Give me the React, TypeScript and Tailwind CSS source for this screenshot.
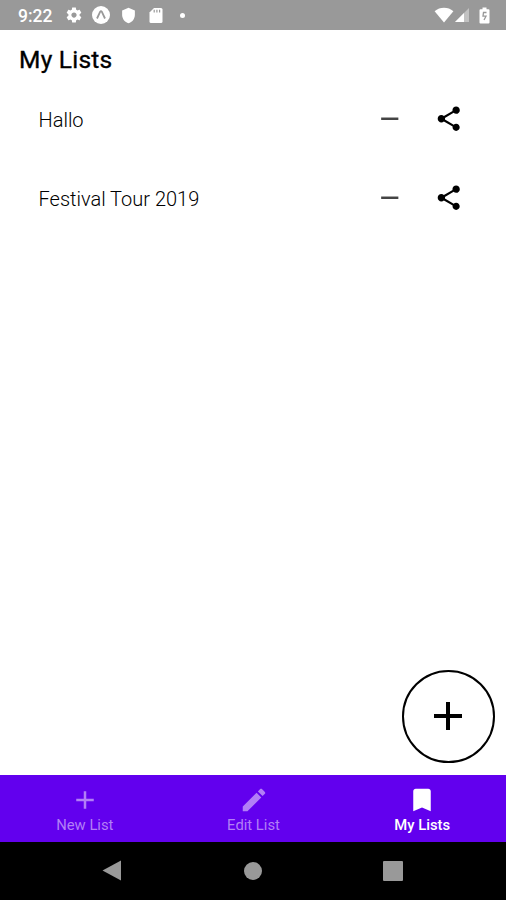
import React from "react";

const paths = {
  gear: "M19.43 12.98c.04-.32.07-.64.07-.98s-.03-.66-.07-.98l2.11-1.65c.19-.15.24-.42.12-.64l-2-3.46c-.12-.22-.39-.3-.61-.22l-2.49 1c-.52-.4-1.08-.73-1.69-.98l-.38-2.65C14.46 2.18 14.25 2 14 2h-4c-.25 0-.46.18-.49.42l-.38 2.65c-.61.25-1.17.59-1.69.98l-2.49-1c-.23-.09-.49 0-.61.22l-2 3.46c-.13.22-.07.49.12.64l2.11 1.65c-.04.32-.07.65-.07.98s.03.66.07.98l-2.11 1.65c-.19.15-.24.42-.12.64l2 3.46c.12.22.39.3.61.22l2.49-1c.52.4 1.08.73 1.69.98l.38 2.65c.03.24.24.42.49.42h4c.25 0 .46-.18.49-.42l.38-2.65c.61-.25 1.17-.59 1.69-.98l2.49 1c.23.09.49 0 .61-.22l2-3.46c.12-.22.07-.49-.12-.64l-2.11-1.65zM12 15.5c-1.93 0-3.5-1.57-3.5-3.5s1.57-3.5 3.5-3.5 3.5 1.57 3.5 3.5-1.57 3.5-3.5 3.5z",
  shield: "M12 1 3 5v6c0 5.55 3.84 10.74 9 12 5.16-1.26 9-6.45 9-12V5l-9-4z",
  share: "M18 16.08c-.76 0-1.44.3-1.96.77L8.91 12.7c.05-.23.09-.46.09-.7s-.04-.47-.09-.7l7.05-4.11c.54.5 1.25.81 2.04.81 1.66 0 3-1.34 3-3s-1.34-3-3-3-3 1.34-3 3c0 .24.04.47.09.7L8.04 9.81C7.5 9.31 6.79 9 6 9c-1.66 0-3 1.34-3 3s1.34 3 3 3c.79 0 1.5-.31 2.04-.81l7.12 4.16c-.05.21-.08.43-.08.65 0 1.61 1.31 2.92 2.92 2.92s2.92-1.31 2.92-2.92-1.31-2.92-2.92-2.92z",
  remove: "M19 13H5v-2h14v2z",
  add: "M19 13h-6v6h-2v-6H5v-2h6V5h2v6h6v2z",
  edit: "M3 17.25V21h3.75L17.81 9.94l-3.75-3.75L3 17.25zM20.71 7.04c.39-.39.39-1.02 0-1.41l-2.34-2.34c-.39-.39-1.02-.39-1.41 0l-1.83 1.83 3.75 3.75 1.83-1.83z",
  bookmark: "M17 3H7c-1.1 0-2 .9-2 2v16l7-3 7 3V5c0-1.1-.9-2-2-2z",
};

function Icon({ d, className }: { d: string; className: string }) {
  return (
    <svg viewBox="0 0 24 24" fill="currentColor" className={`shrink-0 ${className}`}>
      <path d={d} />
    </svg>
  );
}

function StatusBar() {
  return (
    <header className="flex h-[30px] shrink-0 items-center bg-[#999999] pl-[18px] pr-[16px] text-white">
      <span className="w-[47px] pt-[3px] text-[17.5px] font-medium leading-none">9:22</span>
      <Icon d={paths.gear} className="size-[18px]" />
      <svg viewBox="0 0 18 18" className="ml-[9px] size-[18px]">
        <circle cx="9" cy="9" r="9" fill="#fff" />
        <path d="M5 12.5 8.2 5.7q.8-1.2 1.6 0L13 12.5" fill="none" stroke="#999" strokeWidth="1.8" />
      </svg>
      <Icon d={paths.shield} className="ml-[10px] size-[17px]" />
      <svg viewBox="0 0 14 17" className="ml-[12px] h-[17px] w-[14px]" fill="#fff">
        <path d="M5 1h7q1.5 0 1.5 1.5v12q0 1.5-1.5 1.5H2q-1.5 0-1.5-1.5V5.5z" />
        <path d="M5.2 2.8v2.6M7.9 2.8v2.6M10.6 2.8v2.6" stroke="#999" strokeWidth="1.2" />
      </svg>
      <span className="ml-[17px] size-[5px] rounded-full bg-white" />
      <div className="ml-auto flex items-center">
        <svg viewBox="0 0 20 16" className="h-[16px] w-[20px]" fill="#fff">
          <path d="M10 15.5.6 4.2Q4.8.8 10 .8t9.4 3.4z" />
        </svg>
        <svg viewBox="0 0 16 16" className="mr-px h-[16px] w-[16px]" fill="#fff">
          <path d="M15 1v14H1z" opacity=".4" />
          <path d="M10 6v9H1z" />
        </svg>
        <svg viewBox="0 0 11 17" className="ml-[8px] h-[17px] w-[11px]">
          <path d="M3.5.5h4v1.7h2q1 0 1 1v12.3q0 1-1 1h-8q-1 0-1-1V3.2q0-1 1-1h2z" fill="#fff" />
          <path d="M7.5 5.5H4.5L4 9.2H7L5 13" fill="none" stroke="#999" strokeWidth="1.3" />
        </svg>
      </div>
    </header>
  );
}

function ListRow({ name }: { name: string }) {
  return (
    <li className="flex h-[79px] items-center pl-[38.5px] pr-[42.5px] text-black">
      <span className="flex-1 pt-[3px] text-[20px] font-light leading-6">{name}</span>
      <Icon d={paths.remove} className="mr-[29.5px] size-[29.5px] text-[#444]" />
      <Icon d={paths.share} className="size-[29.5px]" />
    </li>
  );
}

function Tab({ label, icon, active }: { label: string; icon: string; active?: boolean }) {
  return (
    <button
      className={`flex flex-1 flex-col items-center pt-[10px] ${active ? "text-white" : "text-[#b27ff6]"}`}
    >
      <Icon d={icon} className="ml-px size-[30px]" />
      <span className={`ml-px mt-px text-[14.8px] leading-[18px] ${active ? "font-medium" : "font-normal"}`}>
        {label}
      </span>
    </button>
  );
}

export default function App() {
  return (
    <div className="relative flex h-[900px] w-[506px] flex-col overflow-hidden bg-white font-[Roboto,sans-serif]">
      <StatusBar />
      <main className="flex-1">
        <h1 className="h-[49px] pl-[19px] pt-[14px] text-[24.5px] font-normal leading-8 tracking-[0.25px] text-black [-webkit-text-stroke:0.35px_black]">
          My Lists
        </h1>
        <ul>
          <ListRow name="Hallo" />
          <ListRow name="Festival Tour 2019" />
        </ul>
      </main>
      <button className="absolute left-[402px] top-[670px] flex size-[92.5px] items-center justify-center rounded-full border-2 border-black bg-white text-black">
        <Icon d={paths.add} className="size-[48px]" />
      </button>
      <nav className="flex h-[67px] shrink-0 bg-[#6200ee]">
        <Tab label="New List" icon={paths.add} />
        <Tab label="Edit List" icon={paths.edit} />
        <Tab label="My Lists" icon={paths.bookmark} active />
      </nav>
      <footer className="flex h-[58px] shrink-0 items-center justify-center bg-black pb-px pr-[2px] text-[#999]">
        <svg viewBox="0 0 20 21" className="h-[21px] w-[20px]" fill="currentColor">
          <path d="M19 .5v20L.5 10.500z" />
        </svg>
        <span className="ml-[122px] mr-[121px] size-[18px] rounded-full bg-[#999]" />
        <span className="size-[20px] rounded-[1px] bg-[#999]" />
      </footer>
    </div>
  );
}
